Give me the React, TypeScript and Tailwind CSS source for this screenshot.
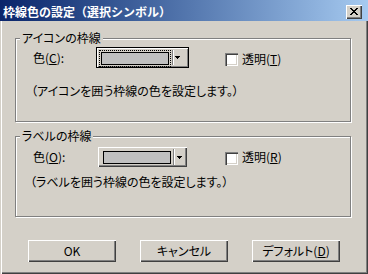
import React from "react";

function U({ children }: { children: React.ReactNode }) {
  return <span className="underline decoration-1 underline-offset-[1px]">{children}</span>;
}

function Arrow() {
  return (
    <svg width="5" height="3" viewBox="0 0 5 3" shapeRendering="crispEdges" className="block shrink-0">
      <rect x="0" y="0" width="5" height="1" fill="#000" />
      <rect x="1" y="1" width="3" height="1" fill="#000" />
      <rect x="2" y="2" width="1" height="1" fill="#000" />
    </svg>
  );
}

function Swatch() {
  return <div className="w-[68px] h-[13px] border border-black bg-[#c0c0c0] shrink-0" />;
}

function Sep({ h }: { h: string }) {
  return (
    <div className={`flex shrink-0 ${h}`}>
      <div className="w-px h-full bg-[#808080]" />
      <div className="w-px h-full bg-white" />
    </div>
  );
}

function ComboFocused() {
  return (
    <div className="w-[93px] h-[21px] border border-black">
      <div className="w-full h-full flex items-center shadow-[inset_1px_1px_0_#fff,inset_-1px_-1px_0_#808080]">
        <div className="ml-[2px] mt-px border border-dotted border-black p-px">
          <Swatch />
        </div>
        <div className="ml-px h-[15px] flex">
          <div className="w-px h-full bg-[#808080]" />
          <div className="w-px h-full bg-white" />
        </div>
        <div className="ml-px">
          <Arrow />
        </div>
      </div>
    </div>
  );
}

function Combo() {
  return (
    <div className="w-[89px] h-[20px] flex items-center pl-[5px] shadow-[inset_1px_1px_0_#fff,inset_-1px_-1px_0_#404040,inset_-2px_-2px_0_#808080]">
      <Swatch />
      <div className="ml-[2px] h-[16px] flex">
        <div className="w-px h-full bg-[#808080]" />
        <div className="w-px h-full bg-white" />
      </div>
      <div className="ml-[2px]">
        <Arrow />
      </div>
    </div>
  );
}

function CheckBox() {
  return (
    <div className="w-[13px] h-[13px] shrink-0 bg-white shadow-[inset_1px_1px_0_#808080,inset_2px_2px_0_#404040,inset_-1px_-1px_0_#fff,inset_-2px_-2px_0_#d4d0c8]" />
  );
}

function Button({ children }: { children: React.ReactNode }) {
  return (
    <div className="w-[88px] h-[22px] flex items-center justify-center text-[12px] leading-[14px] shadow-[inset_1px_1px_0_#fff,inset_-1px_-1px_0_#404040,inset_-2px_-2px_0_#808080]">
      {children}
    </div>
  );
}

function CloseX() {
  const px: [number, number][] = [];
  const rows = ["XX....XX", ".XX..XX.", "..XXXX..", "...XX...", "..XXXX..", ".XX..XX.", "XX....XX"];
  rows.forEach((r, y) => r.split("").forEach((c, x) => c === "X" && px.push([x, y])));
  return (
    <svg width="8" height="7" viewBox="0 0 8 7" shapeRendering="crispEdges" className="block">
      {px.map(([x, y]) => (
        <rect key={`${x}-${y}`} x={x} y={y} width="1" height="1" fill="#000" />
      ))}
    </svg>
  );
}

export default function App() {
  return (
    <div className="w-[368px] h-[274px] bg-[#d4d0c8] flex flex-col overflow-hidden text-black font-['Noto_Sans_CJK_JP','Noto_Sans',sans-serif] [font-feature-settings:'palt']">
      {/* Title bar */}
      <div className="h-[21px] shrink-0 flex items-center pt-[2px] pl-[3px] pr-[6px] bg-linear-to-r from-[#0a246a] to-[#a6caf0]">
        <span className="text-white font-bold text-[12px] leading-[14px] [font-feature-settings:normal] whitespace-nowrap">
          枠線色の設定（選択シンボル）
        </span>
        <div className="ml-auto w-[16px] h-[14px] bg-[#d4d0c8] flex items-start pl-[4px] pt-[3px] shadow-[inset_1px_1px_0_#fff,inset_-1px_-1px_0_#404040,inset_-2px_-2px_0_#808080]">
          <CloseX />
        </div>
      </div>

      {/* Body */}
      <div className="flex-1 flex flex-col pl-[15px] pt-[17px] shadow-[inset_1px_0_0_#d4d0c8,inset_2px_0_0_#fff,inset_-1px_-1px_0_#404040,inset_-2px_-2px_0_#808080]">
        {/* Frame 1 */}
        <div className="relative w-[336px] h-[84px] shrink-0 border border-[#808080] shadow-[inset_1px_1px_0_#fff,1px_1px_0_#fff] pt-[8px]">
          <span className="absolute left-[4px] top-[-8px] bg-[#d4d0c8] px-[2px] text-[12px] leading-[14px] whitespace-nowrap">
            アイコンの枠線
          </span>
          <div className="flex items-center h-[21px] pl-[17px] text-[12px] leading-[14px]">
            <span className="w-[63px] shrink-0 whitespace-nowrap">
              色(<U>C</U>):
            </span>
            <div className="w-[129px] shrink-0">
              <ComboFocused />
            </div>
            <div className="mt-[4px]">
              <CheckBox />
            </div>
            <span className="ml-[4px] mt-[3px] whitespace-nowrap">
              透明(<U>T</U>)
            </span>
          </div>
          <div className="mt-[16px] pl-[15px] text-[12px] leading-[14px] whitespace-nowrap">
            （アイコンを囲う枠線の色を設定します。）
          </div>
        </div>

        {/* Frame 2 */}
        <div className="relative mt-[14px] w-[336px] h-[81px] shrink-0 border border-[#808080] shadow-[inset_1px_1px_0_#fff,1px_1px_0_#fff] pt-[10px]">
          <span className="absolute left-[4px] top-[-8px] bg-[#d4d0c8] px-[2px] text-[12px] leading-[14px] whitespace-nowrap">
            ラベルの枠線
          </span>
          <div className="flex items-center h-[20px] pl-[17px] text-[12px] leading-[14px]">
            <span className="w-[65px] shrink-0 whitespace-nowrap">
              色(<U>O</U>):
            </span>
            <div className="w-[127px] shrink-0">
              <Combo />
            </div>
            <div className="mt-[2px]">
              <CheckBox />
            </div>
            <span className="ml-[4px] whitespace-nowrap">
              透明(<U>R</U>)
            </span>
          </div>
          <div className="mt-[8px] pl-[14px] text-[12px] leading-[14px] whitespace-nowrap">
            （ラベルを囲う枠線の色を設定します。）
          </div>
        </div>

        {/* Buttons */}
        <div className="mt-[23px] ml-[13px] flex gap-[24px]">
          <Button>OK</Button>
          <Button>キャンセル</Button>
          <Button>
            デフォルト(<U>D</U>)
          </Button>
        </div>
      </div>
    </div>
  );
}
